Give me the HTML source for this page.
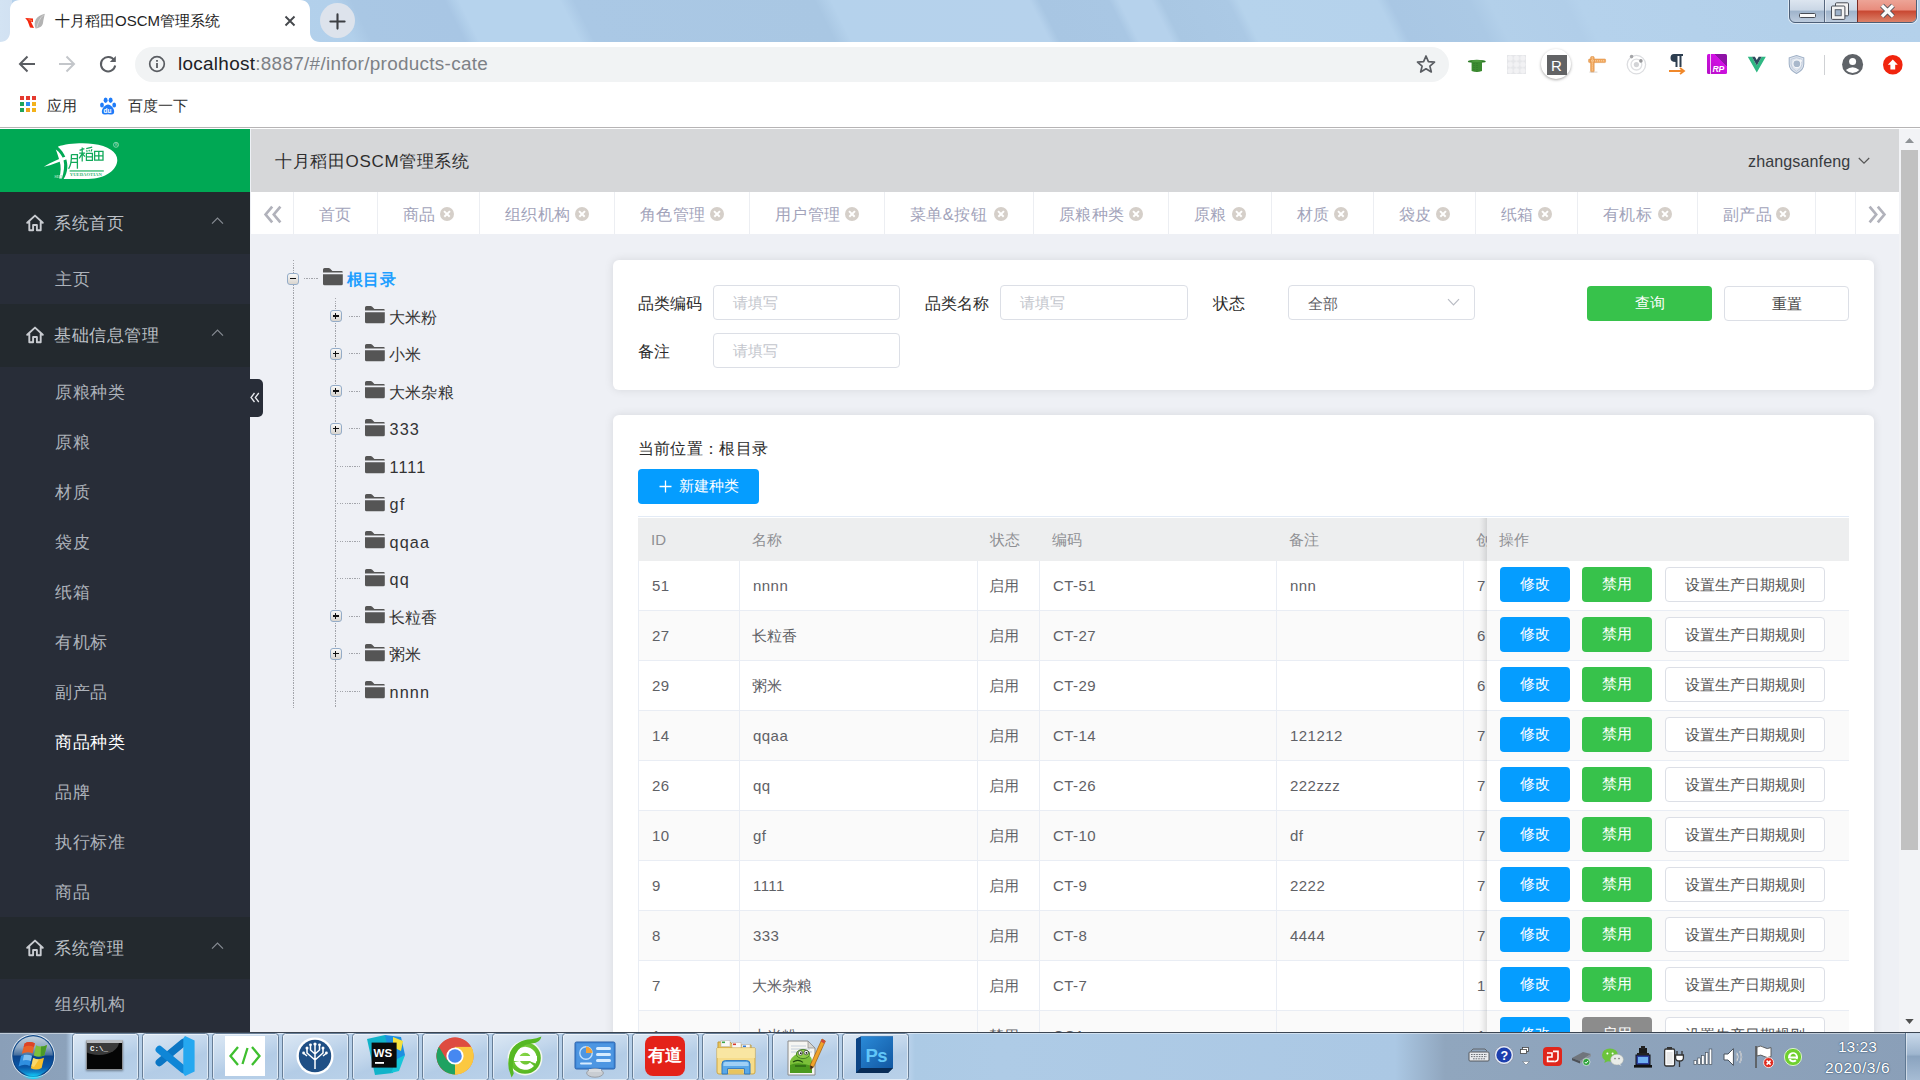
<!DOCTYPE html>
<html lang="zh"><head><meta charset="utf-8"><title>十月稻田OSCM管理系统</title>
<style>
*{box-sizing:border-box}
html,body{margin:0;padding:0;width:1920px;height:1080px;overflow:hidden;background:#fff;font-family:"Liberation Sans",sans-serif;color:#333}
.a{position:absolute}
.t{position:absolute;white-space:nowrap;line-height:1}
svg{position:absolute;overflow:visible}
#strip{left:0;top:0;width:1920px;height:42px;background:linear-gradient(63.4deg,#d3e2f2 9px,#d0e0f0 18px,#b6d2ec 29px,#b2d0eb 317px,#a9c7e4 333px,#a8c6e4 416px,#b6d3ed 429px,#b6d3ed 519px,#aac8e5 532px,#a9c7e3 747px,#b5d2ec 762px,#b6d2ec 939px,#a8c6e3 948px,#a9c7e4 1010px,#b6d2ec 1019px,#b6d2ec 1048px,#a9c7e3 1057px,#abc9e5 1116px,#b6d3ec 1126px,#b5d2ec 1250px,#a9c7e4 1261px,#abc9e5 1332px,#b3d0ea 1350px,#b1cee9 1417px,#b5d2ec 1430px,#b3d0ea 1609px,#b4d1eb 1725px)}
#toolbar{left:0;top:42px;width:1920px;height:46px;background:#fff}
#bm{left:0;top:88px;width:1920px;height:39px;background:#fff}
#page{left:0;top:129px;width:1899px;height:903px;background:#eef0f5;overflow:hidden}
#side{left:0;top:0;width:250px;height:903px;background:#282d38}
#logo{left:0;top:0;width:250px;height:63px;background:#00a854}
.mh{left:0;width:250px;background:#23292e}
.mh .t{left:54px;font-size:17px;letter-spacing:.5px;color:#bcc0c6}
.mi{left:0;width:250px;height:50px}
.mi .t{left:55px;top:17px;font-size:17px;letter-spacing:.5px;color:#adb2ba}
#hdr{left:251px;top:0;width:1648px;height:63px;background:#d6d7d9}
#tabs{left:251px;top:63px;width:1648px;height:42px;background:#fff}
.tab{top:0;height:42px;border-right:1px solid #eceef2}
.tab .t{top:14px;left:24.5px;font-size:16.25px;letter-spacing:.6px;color:#a2a3ba}
.tab i{position:absolute;top:14.5px;width:14px;height:14px;border-radius:50%;background:#d5cfc9}
.tab i:before,.tab i:after{content:"";position:absolute;left:3px;top:6.2px;width:8px;height:1.6px;background:#fff;transform:rotate(45deg)}
.tab i:after{transform:rotate(-45deg)}
.card{background:#fff;border-radius:6px;box-shadow:0 0 10px rgba(0,0,0,.1)}
.inp{height:35px;border:1px solid #dcdfe6;border-radius:4px;background:#fff}
.inp .t{left:19px;top:10px;font-size:14.7px;color:#c3c6cd}
.lbl{font-size:16.25px;color:#2b2b2b}
.btn{height:35px;border-radius:4px;color:#fff;font-size:15px;text-align:center;line-height:34px;white-space:nowrap}
.blue{background:#059dff}.green{background:#37c24b}.wht{background:#fff;border:1px solid #dcdfe6;color:#555}
.th{font-size:15px;color:#8f9094;top:15px}
.td{font-size:15px;color:#5f6166;letter-spacing:.45px}
.tw{position:absolute;width:12px;height:12px;border:1.5px solid #94acc8;border-radius:3px;background:linear-gradient(#f8f8f7,#d8d4ce)}
.tw:before{content:"";position:absolute;left:1.5px;top:4.3px;width:6px;height:1.6px;background:#111}
.tw.p:after{content:"";position:absolute;left:3.7px;top:2.1px;width:1.6px;height:6px;background:#111}
.hd{position:absolute;height:1px;background:repeating-linear-gradient(to right,#a3a5ab 0,#a3a5ab 1.25px,transparent 1.25px,transparent 2.5px)}
.vd{position:absolute;width:1px;background:repeating-linear-gradient(to bottom,#a3a5ab 0,#a3a5ab 1.25px,transparent 1.25px,transparent 2.5px)}
.tn{font-size:16.25px;letter-spacing:.45px;color:#333}
.tb{position:absolute;top:0.5px;width:67px;height:48px;border:1px solid #677e97;border-radius:3.5px;background:linear-gradient(160deg,#dce8f4,#c3d7ec 40%,#b3cce6 60%,#b9d1e9);box-shadow:inset 0 0 0 1px rgba(255,255,255,.55)}
</style></head><body>

<div id="strip" class="a"></div>
<div class="a" style="left:0;top:0;width:12px;height:42px;background:linear-gradient(90deg,#d3e3f3,#d1e1f2)"></div>
<svg style="left:0;top:0" width="330" height="42"><path d="M0 42 C6 42 10 38 10 32 V10 C10 4 14 0 20 0 H300 C306 0 310 4 310 10 V32 C310 38 314 42 320 42 Z" fill="#fff"/></svg>
<svg style="left:24px;top:12px" width="22" height="18" viewBox="0 0 22 18"><path d="M11.6 16.4 C9 10 12 3.6 20.8 1.8 C20 6 19.4 8 19 11 C18.6 14 16 16 11.6 16.4Z" fill="#b3b3b3"/><path d="M13 15.4 C14 10 16 6 19.4 3.2" fill="none" stroke="#dcdcdc" stroke-width=".7"/><path d="M1.2 6 L9 6.6 L9 10.2 L6.8 9.4 L10 16 L6 15.4 L3.6 9Z" fill="#f5260e"/><path d="M4.6 7.6 L8 8.6" stroke="#f9a05a" stroke-width=".8"/></svg>
<div class="t" style="left:55px;top:13px;font-size:15px;color:#1f1f1f">十月稻田OSCM管理系统</div>
<svg style="left:284px;top:15px" width="12" height="12"><path d="M1.5 1.5 L10.5 10.5 M10.5 1.5 L1.5 10.5" stroke="#45484c" stroke-width="1.9" fill="none"/></svg>
<div class="a" style="left:320px;top:3px;width:35px;height:35px;border-radius:50%;background:#dde3ec"></div>
<svg style="left:329px;top:12.5px" width="17" height="17"><path d="M8.5 1.4 V15.6 M1.4 8.5 H15.6" stroke="#3c3f43" stroke-width="2.1" stroke-linecap="round" fill="none"/></svg>
<div class="a" style="left:1789px;top:-6px;width:128px;height:29px;border:1px solid #4d5f77;border-radius:0 0 6px 6px;background:linear-gradient(#e6edf5,#c9d6e5 57%,#9db2ca 58%,#bccbdd);box-shadow:0 0 0 1px rgba(255,255,255,.55)"></div>
<div class="a" style="left:1857px;top:-6px;width:59px;height:28px;border-left:1px solid #7a2a22;border-radius:0 0 5px 0;background:linear-gradient(#f0b3a6,#e88b7c 58%,#c84630 60%,#dc8168)"></div>
<div class="a" style="left:1824px;top:0;width:1px;height:22px;background:#56677f"></div><div class="a" style="left:1825px;top:0;width:1px;height:22px;background:rgba(255,255,255,.5)"></div>
<div class="a" style="left:1799px;top:13px;width:17px;height:5px;border:1px solid #474c55;background:#fafafa;border-radius:1.5px"></div>
<svg style="left:1830px;top:2px" width="20" height="18"><rect x="5.5" y="0.8" width="13" height="13" rx="1" fill="#f4f4f4" stroke="#474c55" stroke-width="1"/><rect x="1.5" y="4" width="13.4" height="13.4" rx="1" fill="#f4f4f4" stroke="#474c55" stroke-width="1"/><rect x="5.2" y="7.7" width="6" height="6" fill="#9fb3cb" stroke="#59616c" stroke-width="1"/></svg>
<svg style="left:1880px;top:4px" width="15" height="14"><path d="M2 1.5 L13 12.5 M13 1.5 L2 12.5" stroke="#4a4f58" stroke-width="5.2" fill="none"/><path d="M2 1.5 L13 12.5 M13 1.5 L2 12.5" stroke="#fafafa" stroke-width="3.4" fill="none"/></svg>
<div id="toolbar" class="a"></div>
<svg style="left:18px;top:55px" width="18" height="18"><path d="M17 9 H2.5 M9.5 1.5 L2 9 L9.5 16.5" stroke="#5a5d62" stroke-width="2" fill="none"/></svg>
<svg style="left:58px;top:55px" width="18" height="18"><path d="M1 9 H15.5 M8.5 1.5 L16 9 L8.5 16.5" stroke="#c3c6ca" stroke-width="2" fill="none"/></svg>
<svg style="left:98px;top:54px" width="20" height="20"><path d="M16.2 6.3 A7.2 7.2 0 1 0 17.2 11.5" stroke="#5a5d62" stroke-width="2" fill="none"/><path d="M17.8 2 V8 H11.8 Z" fill="#5a5d62"/></svg>
<div class="a" style="left:135px;top:47px;width:1314px;height:35px;border-radius:18px;background:#f1f3f4"></div>
<svg style="left:148px;top:55px" width="18" height="18"><circle cx="9" cy="9" r="7.3" stroke="#5a5d62" stroke-width="1.7" fill="none"/><path d="M9 8 V13 M9 5 V6.7" stroke="#5a5d62" stroke-width="1.8"/></svg>
<div class="t" style="left:178px;top:55px;font-size:18.9px;letter-spacing:.3px;color:#202124">localhost<span style="color:#7d8186">:8887/#/infor/products-cate</span></div>
<svg style="left:1416px;top:54px" width="20" height="20" viewBox="0 0 20 20"><path d="M10 2 L12.4 7.6 L18.5 8.1 L13.9 12.1 L15.3 18 L10 14.8 L4.7 18 L6.1 12.1 L1.5 8.1 L7.6 7.6 Z" fill="none" stroke="#5a5d62" stroke-width="1.7" stroke-linejoin="round"/></svg>
<svg style="left:1466px;top:54px" width="22" height="22"><ellipse cx="10.8" cy="7.4" rx="9" ry="1.7" fill="#2b7a24"/><path d="M5.6 7.6 H16 V17 Q10.8 19 5.6 17Z" fill="#3b8a30"/><path d="M8 9 V17 M11 9 V17.6" stroke="#2f7427" stroke-width=".8" stroke-dasharray="1 1"/><ellipse cx="10.8" cy="7" rx="5.4" ry=".9" fill="#4f9d41"/></svg>
<div class="a" style="left:1507px;top:55px;width:19px;height:19px;background:#e5e6e9;background-image:radial-gradient(circle at 50% 50%,#f2f2f4 2.5px,transparent 3px);background-size:6.33px 6.33px"></div>
<div class="a" style="left:1541px;top:49px;width:30px;height:30px;border-radius:50%;background:#fff;box-shadow:0 1px 3px rgba(0,0,0,.35)"></div>
<div class="a" style="left:1546.5px;top:54.6px;width:20px;height:20px;background:#626365;color:#fff;font-size:15px;text-align:center;line-height:21px">R</div>
<svg style="left:1586px;top:54px" width="22" height="22"><rect x="2.6" y="5" width="17" height="3.6" rx=".8" fill="#f2a85e" stroke="#d98a3e" stroke-width=".5"/><rect x="4.6" y="2.6" width="3.6" height="15.4" rx=".8" fill="#f2a85e" stroke="#d98a3e" stroke-width=".5"/><path d="M6.4 3.4 V17.4 M5 6.8 H19" stroke="#fbd9b0" stroke-width=".9" stroke-dasharray="1 1"/><rect x="3.4" y="17.6" width="8" height="1" fill="#c9c0b8" opacity=".7"/></svg>
<svg style="left:1625px;top:53px" width="24" height="24"><circle cx="11.4" cy="11.6" r="9.2" fill="none" stroke="#dcdde0" stroke-width="1.3"/><circle cx="11.4" cy="11.6" r="5.4" fill="none" stroke="#dfe0e3" stroke-width="1.3"/><circle cx="11.4" cy="11.6" r="2.6" fill="#d3d4d7"/><circle cx="6.6" cy="3.6" r="1.8" fill="#a4a5a8"/><circle cx="15.9" cy="7.9" r="1.8" fill="#97989b"/></svg>
<svg style="left:1666px;top:51.5px" width="22" height="24"><path d="M8 2 H17 V4 H15.5 V15 H13.5 V4 H11.5 V15 H9.5 V10 Q4.5 10 4.5 6 Q4.5 2 8 2Z" fill="#2d3e50"/><path d="M3 19 H17 M14 16 L18 19 L14 22" stroke="#f0882a" stroke-width="1.8" fill="none"/></svg>
<div class="a" style="left:1706.5px;top:54.4px;width:20px;height:20px;border-radius:1.5px;background:linear-gradient(225deg,#8f12a6 0,#8f12a6 30%,#d411e6 31%,#b50fc6 100%)"></div><div class="a" style="left:1709.5px;top:54.4px;width:1.6px;height:20px;background:#f0c4f4"></div><div class="t" style="left:1712.6px;top:65.4px;font-size:8.6px;color:#fff;font-weight:bold;font-style:italic;letter-spacing:-.3px">RP</div>
<svg style="left:1746.6px;top:56px" width="19.6" height="16.4" viewBox="0 0 22 20"><path d="M0 1 H5 L11 11.5 L17 1 H22 L11 20Z" fill="#2fb883"/><path d="M5 1 H8.7 L11 5 L13.3 1 H17 L11 11.5Z" fill="#2d4a5e"/></svg>
<svg style="left:1788px;top:54px" width="17" height="21" viewBox="0 0 20 23"><path d="M10 1 L18.6 3.6 V11 Q18.6 18 10 22 Q1.4 18 1.4 11 V3.6Z" fill="#dfe5ee" stroke="#9fb0c6" stroke-width="1.2"/><path d="M10 3.4 L16.4 5.4 V11 Q16.4 16.4 10 19.6 Q3.6 16.4 3.6 11 V5.4Z" fill="none" stroke="#b7c4d6" stroke-width=".9"/><circle cx="10.4" cy="10.6" r="4.6" fill="#a9b8cb" stroke="#f4f6f9" stroke-width="1.3"/><circle cx="15" cy="7" r="1.5" fill="#f4f6f9"/></svg>
<div class="a" style="left:1824px;top:55px;width:1px;height:20px;background:#cfd1d4"></div>
<svg style="left:1842px;top:54px" width="21" height="21"><circle cx="10.6" cy="10.5" r="10.5" fill="#5f6368"/><circle cx="10.6" cy="7.4" r="3.5" fill="#fff"/><path d="M3.9 16 Q10.6 10.6 17.3 16 Q14.4 19 10.6 19 Q6.8 19 3.9 16Z" fill="#fff"/></svg>
<svg style="left:1883px;top:55px" width="20" height="20"><circle cx="9.8" cy="9.7" r="9.8" fill="#f1240d"/><path d="M9.8 4.4 L14.8 9.8 H12.2 V14.6 H7.4 V9.8 H4.8Z" fill="#fff"/></svg>
<div id="bm" class="a"></div>
<div class="a" style="left:20px;top:96px;width:4px;height:4px;background:#e53a2f"></div>
<div class="a" style="left:26px;top:96px;width:4px;height:4px;background:#e53a2f"></div>
<div class="a" style="left:32px;top:96px;width:4px;height:4px;background:#e53a2f"></div>
<div class="a" style="left:20px;top:102px;width:4px;height:4px;background:#1fa45a"></div>
<div class="a" style="left:26px;top:102px;width:4px;height:4px;background:#2f8df0"></div>
<div class="a" style="left:32px;top:102px;width:4px;height:4px;background:#f3b21b"></div>
<div class="a" style="left:20px;top:108px;width:4px;height:4px;background:#1fa45a"></div>
<div class="a" style="left:26px;top:108px;width:4px;height:4px;background:#f3a21b"></div>
<div class="a" style="left:32px;top:108px;width:4px;height:4px;background:#f3b21b"></div>
<div class="t" style="left:47px;top:98px;font-size:15px;color:#2f2f2f">应用</div>
<svg style="left:99px;top:96.5px" width="18" height="19"><ellipse cx="3" cy="8" rx="1.9" ry="2.6" fill="#1f7cf8"/><ellipse cx="6.6" cy="3.3" rx="2" ry="2.7" fill="#1f7cf8"/><ellipse cx="11.6" cy="3.3" rx="2" ry="2.7" fill="#1f7cf8"/><ellipse cx="15.2" cy="8" rx="1.9" ry="2.6" fill="#1f7cf8"/><path d="M9 7.5 Q13 8 15 13 Q16 18 11.5 17.5 Q9 17 6.5 17.5 Q2 18 3 13 Q5 8 9 7.5Z" fill="#1f7cf8"/><text x="4.6" y="15.6" font-size="6.5" fill="#fff" font-family="Liberation Sans" font-weight="bold">du</text></svg>
<div class="t" style="left:128px;top:98px;font-size:15px;color:#2f2f2f">百度一下</div>
<div class="a" style="left:0;top:127px;width:1920px;height:1px;background:#b6b4b5"></div>
<div id="page" class="a">
<div id="side" class="a">
<div id="logo" class="a"><svg style="left:30px;top:3px" width="110" height="58" viewBox="0 0 110 58"><path d="M27.8 14.7 C36 11.6 52 10.6 63 11.9 C78 13.6 87.6 20 87.3 28.2 C87 37.5 76 46.6 58 47 L33.6 47 C38 40 38.4 32 35.6 25.4 C34 21.4 31 17.4 27.8 14.7Z" fill="#fff"/><path d="M13.8 34.8 C21 30.2 29 26.8 38 23.8 L39 26.4 C30 29.4 22 32.8 13.8 34.8Z" fill="#fff"/><path d="M25.8 17.6 C29.4 20 32.4 24 33.6 28.4 C34.8 33.4 34 40 31.8 46.6 L29.2 46.6 C31 40 31.2 33.8 29.6 29.2 C28.6 25.6 27.4 21.4 25.8 17.6Z" fill="#fff"/><path d="M41.4 22.6 H47.4 V36.8 M41.4 22.6 C41.6 29 41 33.4 38.6 36.8 M41.6 26.6 H47 M41.4 30.4 H47" fill="none" stroke="#11a95a" stroke-width="1.3"/><path d="M49.6 18.4 L54.4 16.6 M52.2 15.4 V29.4 M49.2 21.2 H55 M52.2 21.6 L49.2 26.4 M52.4 21.8 L55 24.6" fill="none" stroke="#11a95a" stroke-width="1.25"/><path d="M56.2 16.6 L62.2 15.2 M56.6 18.2 L57.2 19.8 M59 17.8 L59.4 19.4 M62 17.2 L61 19.4 M56.4 21.4 H62.4 V28.4 H56.4Z M56.4 24.8 H62.4" fill="none" stroke="#11a95a" stroke-width="1.2"/><path d="M64.6 19.4 H73 V28.2 H64.6Z M68.8 19.4 V28.2 M64.6 23.8 H73" fill="none" stroke="#11a95a" stroke-width="1.3"/><rect x="39.6" y="38.2" width="34.2" height="1.5" fill="#4cc383"/><text x="39.8" y="44.4" font-family="Liberation Serif" font-weight="bold" font-size="4.6" fill="#36b673" textLength="32" lengthAdjust="spacingAndGlyphs">YUEDAOTIAN</text><text x="24.2" y="46" font-family="Liberation Serif" font-weight="bold" font-size="4.2" fill="#a5e0c0" textLength="8" lengthAdjust="spacingAndGlyphs">SHI</text><circle cx="86" cy="12.8" r="2.5" fill="none" stroke="#9fdcbc" stroke-width=".8"/><text x="84.9" y="14.2" font-family="Liberation Sans" font-size="3.6" fill="#c5ead7">R</text></svg></div>
<div class="a mh" style="top:63px;height:62px"><svg style="left:25px;top:21px" width="20" height="20"><path d="M2.2 9.8 L10 2.6 L17.8 9.8 M4.3 8.6 V17.2 H8.1 V12 H11.9 V17.2 H15.7 V8.6" fill="none" stroke="#c9ccd1" stroke-width="1.9" stroke-linejoin="round" stroke-linecap="round"/></svg><div class="t" style="top:23px">系统首页</div><svg style="left:211px;top:24px" width="13" height="8"><path d="M1 7.6 L6.5 2.1 L12 7.6" fill="none" stroke="#878c93" stroke-width="1.15"/></svg></div>
<div class="a mi" style="top:125px"><div class="t" style="">主页</div></div>
<div class="a mh" style="top:175px;height:63px"><svg style="left:25px;top:21px" width="20" height="20"><path d="M2.2 9.8 L10 2.6 L17.8 9.8 M4.3 8.6 V17.2 H8.1 V12 H11.9 V17.2 H15.7 V8.6" fill="none" stroke="#c9ccd1" stroke-width="1.9" stroke-linejoin="round" stroke-linecap="round"/></svg><div class="t" style="top:23px">基础信息管理</div><svg style="left:211px;top:24px" width="13" height="8"><path d="M1 7.6 L6.5 2.1 L12 7.6" fill="none" stroke="#878c93" stroke-width="1.15"/></svg></div>
<div class="a mi" style="top:238px"><div class="t" style="">原粮种类</div></div>
<div class="a mi" style="top:288px"><div class="t" style="">原粮</div></div>
<div class="a mi" style="top:338px"><div class="t" style="">材质</div></div>
<div class="a mi" style="top:388px"><div class="t" style="">袋皮</div></div>
<div class="a mi" style="top:438px"><div class="t" style="">纸箱</div></div>
<div class="a mi" style="top:488px"><div class="t" style="">有机标</div></div>
<div class="a mi" style="top:538px"><div class="t" style="">副产品</div></div>
<div class="a mi" style="top:588px"><div class="t" style="color:#fff">商品种类</div></div>
<div class="a mi" style="top:638px"><div class="t" style="">品牌</div></div>
<div class="a mi" style="top:688px"><div class="t" style="">执行标准</div></div>
<div class="a mi" style="top:738px"><div class="t" style="">商品</div></div>
<div class="a mh" style="top:788px;height:62px"><svg style="left:25px;top:21px" width="20" height="20"><path d="M2.2 9.8 L10 2.6 L17.8 9.8 M4.3 8.6 V17.2 H8.1 V12 H11.9 V17.2 H15.7 V8.6" fill="none" stroke="#c9ccd1" stroke-width="1.9" stroke-linejoin="round" stroke-linecap="round"/></svg><div class="t" style="top:23px">系统管理</div><svg style="left:211px;top:24px" width="13" height="8"><path d="M1 7.6 L6.5 2.1 L12 7.6" fill="none" stroke="#878c93" stroke-width="1.15"/></svg></div>
<div class="a mi" style="top:850px"><div class="t" style="">组织机构</div></div>
</div>
<div class="a" style="left:250px;top:250px;width:13px;height:38px;background:#282d38;border-radius:0 5px 5px 0"></div>
<svg style="left:250px;top:263px" width="10" height="11"><path d="M4.5 1 L1 5.5 L4.5 10 M8.8 1 L5.3 5.5 L8.8 10" fill="none" stroke="#e8eaee" stroke-width="1.3"/></svg>
<div id="hdr" class="a"><div class="t" style="left:24px;top:24px;letter-spacing:.65px;font-size:17px;color:#2e2e2e">十月稻田OSCM管理系统</div><div class="t" style="left:1497px;top:24px;font-size:16.1px;letter-spacing:.1px;color:#383b40">zhangsanfeng</div><svg style="left:1607px;top:28px" width="12" height="8"><path d="M0.8 1 L6 6.2 L11.2 1" fill="none" stroke="#555" stroke-width="1.2"/></svg></div>
<div id="tabs" class="a">
<div class="a tab" style="left:0;width:43px"></div>
<svg style="left:13px;top:13.6px" width="18" height="17"><path d="M8.2 0.6 L1.6 8.5 L8.2 16.4 M16.4 0.6 L9.8 8.5 L16.4 16.4" fill="none" stroke="#b1b2bb" stroke-width="2.7"/></svg>
<div class="a tab" style="left:43px;width:84px"><div class="t">首页</div></div>
<div class="a tab" style="left:127px;width:102px"><div class="t">商品</div><i style="left:61.5px"></i></div>
<div class="a tab" style="left:229px;width:135px"><div class="t">组织机构</div><i style="left:94.5px"></i></div>
<div class="a tab" style="left:364px;width:135px"><div class="t">角色管理</div><i style="left:94.5px"></i></div>
<div class="a tab" style="left:499px;width:135px"><div class="t">用户管理</div><i style="left:94.5px"></i></div>
<div class="a tab" style="left:634px;width:149px"><div class="t">菜单&amp;按钮</div><i style="left:108.5px"></i></div>
<div class="a tab" style="left:783px;width:135px"><div class="t">原粮种类</div><i style="left:94.5px"></i></div>
<div class="a tab" style="left:918px;width:103px"><div class="t">原粮</div><i style="left:62.5px"></i></div>
<div class="a tab" style="left:1021px;width:102px"><div class="t">材质</div><i style="left:61.5px"></i></div>
<div class="a tab" style="left:1123px;width:102px"><div class="t">袋皮</div><i style="left:61.5px"></i></div>
<div class="a tab" style="left:1225px;width:102px"><div class="t">纸箱</div><i style="left:61.5px"></i></div>
<div class="a tab" style="left:1327px;width:120px"><div class="t">有机标</div><i style="left:79.5px"></i></div>
<div class="a tab" style="left:1447px;width:118px"><div class="t">副产品</div><i style="left:77.5px"></i></div>
<div class="a tab" style="left:1565px;width:40px"><div class="t"></div></div>
<svg style="left:1617px;top:13.6px" width="18" height="17"><path d="M1.6 0.6 L8.2 8.5 L1.6 16.4 M9.8 0.6 L16.4 8.5 L9.8 16.4" fill="none" stroke="#b1b2bb" stroke-width="2.7"/></svg>
</div>
<div class="vd" style="left:293px;top:131px;height:448px"></div>
<div class="vd" style="left:335px;top:169px;height:410px"></div>
<div class="tw" style="left:287px;top:143.5px"></div>
<div class="hd" style="left:304px;top:149.0px;width:14px"></div>
<svg style="left:322.8px;top:139.0px" width="20" height="18" viewBox="0 0 20 18"><path d="M0 1.6 Q0 0 1.6 0 H5.6 Q6.4 0 7 .6 L9.4 3.1 H18.6 Q19.8 3.1 19.8 4.4 H0Z" fill="#555"/><path d="M0 6.3 H19.8 V15.8 Q19.8 17.3 18.3 17.3 H1.5 Q0 17.3 0 15.8Z" fill="#555"/></svg>
<div class="t tn" style="left:347px;top:141.5px;color:#1e9fff;font-weight:bold">根目录</div>
<div class="tw p" style="left:330px;top:181.0px"></div>
<div class="hd" style="left:349px;top:186.5px;width:11px"></div>
<svg style="left:365px;top:177.0px" width="20" height="18" viewBox="0 0 20 18"><path d="M0 1.6 Q0 0 1.6 0 H5.6 Q6.4 0 7 .6 L9.4 3.1 H18.6 Q19.8 3.1 19.8 4.4 H0Z" fill="#555"/><path d="M0 6.3 H19.8 V15.8 Q19.8 17.3 18.3 17.3 H1.5 Q0 17.3 0 15.8Z" fill="#555"/></svg>
<div class="t tn" style="left:388.5px;top:179.5px">大米粉</div>
<div class="tw p" style="left:330px;top:218.5px"></div>
<div class="hd" style="left:349px;top:224.0px;width:11px"></div>
<svg style="left:365px;top:214.5px" width="20" height="18" viewBox="0 0 20 18"><path d="M0 1.6 Q0 0 1.6 0 H5.6 Q6.4 0 7 .6 L9.4 3.1 H18.6 Q19.8 3.1 19.8 4.4 H0Z" fill="#555"/><path d="M0 6.3 H19.8 V15.8 Q19.8 17.3 18.3 17.3 H1.5 Q0 17.3 0 15.8Z" fill="#555"/></svg>
<div class="t tn" style="left:388.5px;top:217.0px">小米</div>
<div class="tw p" style="left:330px;top:256.0px"></div>
<div class="hd" style="left:349px;top:261.5px;width:11px"></div>
<svg style="left:365px;top:252.0px" width="20" height="18" viewBox="0 0 20 18"><path d="M0 1.6 Q0 0 1.6 0 H5.6 Q6.4 0 7 .6 L9.4 3.1 H18.6 Q19.8 3.1 19.8 4.4 H0Z" fill="#555"/><path d="M0 6.3 H19.8 V15.8 Q19.8 17.3 18.3 17.3 H1.5 Q0 17.3 0 15.8Z" fill="#555"/></svg>
<div class="t tn" style="left:388.5px;top:254.5px">大米杂粮</div>
<div class="tw p" style="left:330px;top:293.5px"></div>
<div class="hd" style="left:349px;top:299.0px;width:11px"></div>
<svg style="left:365px;top:289.5px" width="20" height="18" viewBox="0 0 20 18"><path d="M0 1.6 Q0 0 1.6 0 H5.6 Q6.4 0 7 .6 L9.4 3.1 H18.6 Q19.8 3.1 19.8 4.4 H0Z" fill="#555"/><path d="M0 6.3 H19.8 V15.8 Q19.8 17.3 18.3 17.3 H1.5 Q0 17.3 0 15.8Z" fill="#555"/></svg>
<div class="t tn" style="left:389.5px;top:292.0px;letter-spacing:1.1px">333</div>
<div class="hd" style="left:337px;top:336.5px;width:23px"></div>
<svg style="left:365px;top:327.0px" width="20" height="18" viewBox="0 0 20 18"><path d="M0 1.6 Q0 0 1.6 0 H5.6 Q6.4 0 7 .6 L9.4 3.1 H18.6 Q19.8 3.1 19.8 4.4 H0Z" fill="#555"/><path d="M0 6.3 H19.8 V15.8 Q19.8 17.3 18.3 17.3 H1.5 Q0 17.3 0 15.8Z" fill="#555"/></svg>
<div class="t tn" style="left:389.5px;top:329.5px;letter-spacing:1.1px">1111</div>
<div class="hd" style="left:337px;top:374.0px;width:23px"></div>
<svg style="left:365px;top:364.5px" width="20" height="18" viewBox="0 0 20 18"><path d="M0 1.6 Q0 0 1.6 0 H5.6 Q6.4 0 7 .6 L9.4 3.1 H18.6 Q19.8 3.1 19.8 4.4 H0Z" fill="#555"/><path d="M0 6.3 H19.8 V15.8 Q19.8 17.3 18.3 17.3 H1.5 Q0 17.3 0 15.8Z" fill="#555"/></svg>
<div class="t tn" style="left:389.5px;top:367.0px;letter-spacing:1.1px">gf</div>
<div class="hd" style="left:337px;top:411.5px;width:23px"></div>
<svg style="left:365px;top:402.0px" width="20" height="18" viewBox="0 0 20 18"><path d="M0 1.6 Q0 0 1.6 0 H5.6 Q6.4 0 7 .6 L9.4 3.1 H18.6 Q19.8 3.1 19.8 4.4 H0Z" fill="#555"/><path d="M0 6.3 H19.8 V15.8 Q19.8 17.3 18.3 17.3 H1.5 Q0 17.3 0 15.8Z" fill="#555"/></svg>
<div class="t tn" style="left:389.5px;top:404.5px;letter-spacing:1.1px">qqaa</div>
<div class="hd" style="left:337px;top:449.0px;width:23px"></div>
<svg style="left:365px;top:439.5px" width="20" height="18" viewBox="0 0 20 18"><path d="M0 1.6 Q0 0 1.6 0 H5.6 Q6.4 0 7 .6 L9.4 3.1 H18.6 Q19.8 3.1 19.8 4.4 H0Z" fill="#555"/><path d="M0 6.3 H19.8 V15.8 Q19.8 17.3 18.3 17.3 H1.5 Q0 17.3 0 15.8Z" fill="#555"/></svg>
<div class="t tn" style="left:389.5px;top:442.0px;letter-spacing:1.1px">qq</div>
<div class="tw p" style="left:330px;top:481.0px"></div>
<div class="hd" style="left:349px;top:486.5px;width:11px"></div>
<svg style="left:365px;top:477.0px" width="20" height="18" viewBox="0 0 20 18"><path d="M0 1.6 Q0 0 1.6 0 H5.6 Q6.4 0 7 .6 L9.4 3.1 H18.6 Q19.8 3.1 19.8 4.4 H0Z" fill="#555"/><path d="M0 6.3 H19.8 V15.8 Q19.8 17.3 18.3 17.3 H1.5 Q0 17.3 0 15.8Z" fill="#555"/></svg>
<div class="t tn" style="left:388.5px;top:479.5px">长粒香</div>
<div class="tw p" style="left:330px;top:518.5px"></div>
<div class="hd" style="left:349px;top:524.0px;width:11px"></div>
<svg style="left:365px;top:514.5px" width="20" height="18" viewBox="0 0 20 18"><path d="M0 1.6 Q0 0 1.6 0 H5.6 Q6.4 0 7 .6 L9.4 3.1 H18.6 Q19.8 3.1 19.8 4.4 H0Z" fill="#555"/><path d="M0 6.3 H19.8 V15.8 Q19.8 17.3 18.3 17.3 H1.5 Q0 17.3 0 15.8Z" fill="#555"/></svg>
<div class="t tn" style="left:388.5px;top:517.0px">粥米</div>
<div class="hd" style="left:337px;top:561.5px;width:23px"></div>
<svg style="left:365px;top:552.0px" width="20" height="18" viewBox="0 0 20 18"><path d="M0 1.6 Q0 0 1.6 0 H5.6 Q6.4 0 7 .6 L9.4 3.1 H18.6 Q19.8 3.1 19.8 4.4 H0Z" fill="#555"/><path d="M0 6.3 H19.8 V15.8 Q19.8 17.3 18.3 17.3 H1.5 Q0 17.3 0 15.8Z" fill="#555"/></svg>
<div class="t tn" style="left:389.5px;top:554.5px;letter-spacing:1.1px">nnnn</div>
<div class="a card" style="left:613px;top:131px;width:1261px;height:130px">
<div class="t lbl" style="left:25px;top:35px">品类编码</div>
<div class="a inp" style="left:100px;top:25px;width:187px"><div class="t">请填写</div></div>
<div class="t lbl" style="left:312px;top:35px">品类名称</div>
<div class="a inp" style="left:387px;top:25px;width:188px"><div class="t">请填写</div></div>
<div class="t lbl" style="left:600px;top:35px">状态</div>
<div class="a inp" style="left:675px;top:25px;width:187px"><div class="t" style="color:#5f6166;font-size:15px">全部</div><svg style="left:158px;top:12px" width="13" height="9"><path d="M1 1.2 L6.5 6.8 L12 1.2" fill="none" stroke="#b9bcc4" stroke-width="1.2"/></svg></div>
<div class="a btn green" style="left:974px;top:26px;width:125px">查询</div>
<div class="a btn wht" style="left:1111px;top:26px;width:125px;color:#444">重置</div>
<div class="t lbl" style="left:25px;top:83px">备注</div>
<div class="a inp" style="left:100px;top:73px;width:187px"><div class="t">请填写</div></div>
</div>
<div class="a card" style="left:613px;top:286px;width:1261px;height:700px">
<div class="t lbl" style="left:24.5px;top:25px;letter-spacing:.4px">当前位置：根目录</div>
<div class="a btn blue" style="left:25px;top:54px;width:121px;height:35px"><svg style="left:21px;top:11px" width="13" height="13"><path d="M6.5 0.5 V12.5 M0.5 6.5 H12.5" stroke="#fff" stroke-width="1.3"/></svg><span style="position:absolute;left:41px;top:0">新建种类</span></div>
<div class="a" style="left:25px;top:101px;width:1211px;height:1px;background:#e3ebf6"></div>
<div class="a" style="left:25px;top:103px;width:1211px;height:43px;background:#edeeef"></div>
<div class="t th" style="left:38px;top:117px">ID</div>
<div class="t th" style="left:139px;top:117px">名称</div>
<div class="t th" style="left:377px;top:117px">状态</div>
<div class="t th" style="left:439px;top:117px">编码</div>
<div class="t th" style="left:676px;top:117px">备注</div>
<div class="t th" style="left:863px;top:117px">创建</div>
<div class="a" style="left:25px;top:146px;width:1211px;height:50px;background:#fff;border-bottom:1px solid #e9edf4"></div>
<div class="t td" style="left:39px;top:163px">51</div>
<div class="t td" style="left:140px;top:163px">nnnn</div>
<div class="t td" style="left:376px;top:163px;letter-spacing:0">启用</div>
<div class="t td" style="left:440px;top:163px">CT-51</div>
<div class="t td" style="left:677px;top:163px">nnn</div>
<div class="t td" style="left:864px;top:163px">7</div>
<div class="a" style="left:25px;top:196px;width:1211px;height:50px;background:#fafafa;border-bottom:1px solid #e9edf4"></div>
<div class="t td" style="left:39px;top:213px">27</div>
<div class="t td" style="left:139px;top:213px;letter-spacing:0">长粒香</div>
<div class="t td" style="left:376px;top:213px;letter-spacing:0">启用</div>
<div class="t td" style="left:440px;top:213px">CT-27</div>
<div class="t td" style="left:864px;top:213px">6</div>
<div class="a" style="left:25px;top:246px;width:1211px;height:50px;background:#fff;border-bottom:1px solid #e9edf4"></div>
<div class="t td" style="left:39px;top:263px">29</div>
<div class="t td" style="left:139px;top:263px;letter-spacing:0">粥米</div>
<div class="t td" style="left:376px;top:263px;letter-spacing:0">启用</div>
<div class="t td" style="left:440px;top:263px">CT-29</div>
<div class="t td" style="left:864px;top:263px">6</div>
<div class="a" style="left:25px;top:296px;width:1211px;height:50px;background:#fafafa;border-bottom:1px solid #e9edf4"></div>
<div class="t td" style="left:39px;top:313px">14</div>
<div class="t td" style="left:140px;top:313px">qqaa</div>
<div class="t td" style="left:376px;top:313px;letter-spacing:0">启用</div>
<div class="t td" style="left:440px;top:313px">CT-14</div>
<div class="t td" style="left:677px;top:313px">121212</div>
<div class="t td" style="left:864px;top:313px">7</div>
<div class="a" style="left:25px;top:346px;width:1211px;height:50px;background:#fff;border-bottom:1px solid #e9edf4"></div>
<div class="t td" style="left:39px;top:363px">26</div>
<div class="t td" style="left:140px;top:363px">qq</div>
<div class="t td" style="left:376px;top:363px;letter-spacing:0">启用</div>
<div class="t td" style="left:440px;top:363px">CT-26</div>
<div class="t td" style="left:677px;top:363px">222zzz</div>
<div class="t td" style="left:864px;top:363px">7</div>
<div class="a" style="left:25px;top:396px;width:1211px;height:50px;background:#fafafa;border-bottom:1px solid #e9edf4"></div>
<div class="t td" style="left:39px;top:413px">10</div>
<div class="t td" style="left:140px;top:413px">gf</div>
<div class="t td" style="left:376px;top:413px;letter-spacing:0">启用</div>
<div class="t td" style="left:440px;top:413px">CT-10</div>
<div class="t td" style="left:677px;top:413px">df</div>
<div class="t td" style="left:864px;top:413px">7</div>
<div class="a" style="left:25px;top:446px;width:1211px;height:50px;background:#fff;border-bottom:1px solid #e9edf4"></div>
<div class="t td" style="left:39px;top:463px">9</div>
<div class="t td" style="left:140px;top:463px">1111</div>
<div class="t td" style="left:376px;top:463px;letter-spacing:0">启用</div>
<div class="t td" style="left:440px;top:463px">CT-9</div>
<div class="t td" style="left:677px;top:463px">2222</div>
<div class="t td" style="left:864px;top:463px">7</div>
<div class="a" style="left:25px;top:496px;width:1211px;height:50px;background:#fafafa;border-bottom:1px solid #e9edf4"></div>
<div class="t td" style="left:39px;top:513px">8</div>
<div class="t td" style="left:140px;top:513px">333</div>
<div class="t td" style="left:376px;top:513px;letter-spacing:0">启用</div>
<div class="t td" style="left:440px;top:513px">CT-8</div>
<div class="t td" style="left:677px;top:513px">4444</div>
<div class="t td" style="left:864px;top:513px">7</div>
<div class="a" style="left:25px;top:546px;width:1211px;height:50px;background:#fff;border-bottom:1px solid #e9edf4"></div>
<div class="t td" style="left:39px;top:563px">7</div>
<div class="t td" style="left:139px;top:563px;letter-spacing:0">大米杂粮</div>
<div class="t td" style="left:376px;top:563px;letter-spacing:0">启用</div>
<div class="t td" style="left:440px;top:563px">CT-7</div>
<div class="t td" style="left:864px;top:563px">1</div>
<div class="a" style="left:25px;top:596px;width:1211px;height:50px;background:#fafafa;border-bottom:1px solid #e9edf4"></div>
<div class="t td" style="left:39px;top:613px">1</div>
<div class="t td" style="left:139px;top:613px;letter-spacing:0">大米粉</div>
<div class="t td" style="left:376px;top:613px;letter-spacing:0">禁用</div>
<div class="t td" style="left:440px;top:613px">CC1</div>
<div class="t td" style="left:864px;top:613px">1</div>
<div class="a" style="left:25px;top:146px;width:1px;height:560px;background:#e9edf4"></div>
<div class="a" style="left:126px;top:146px;width:1px;height:560px;background:#e9edf4"></div>
<div class="a" style="left:364px;top:146px;width:1px;height:560px;background:#e9edf4"></div>
<div class="a" style="left:426px;top:146px;width:1px;height:560px;background:#e9edf4"></div>
<div class="a" style="left:663px;top:146px;width:1px;height:560px;background:#e9edf4"></div>
<div class="a" style="left:850px;top:146px;width:1px;height:560px;background:#e9edf4"></div>
<div class="a" style="left:866px;top:103px;width:8px;height:600px;background:linear-gradient(to left,rgba(0,0,0,.11),rgba(0,0,0,.03) 60%,rgba(0,0,0,0))"></div>
<div class="a" style="left:874px;top:102px;width:362px;height:600px">
<div class="a" style="left:0;top:1px;width:362px;height:43px;background:#edeeef"></div>
<div class="t th" style="left:12px;top:15px">操作</div>
<div class="a" style="left:0;top:44px;width:362px;height:50px;background:#fff;border-bottom:1px solid #e9edf4"></div>
<div class="a btn blue" style="left:13px;top:50px;width:70px">修改</div>
<div class="a btn green" style="left:95px;top:50px;width:70px">禁用</div>
<div class="a btn wht" style="left:178px;top:50px;width:160px">设置生产日期规则</div>
<div class="a" style="left:0;top:94px;width:362px;height:50px;background:#fafafa;border-bottom:1px solid #e9edf4"></div>
<div class="a btn blue" style="left:13px;top:100px;width:70px">修改</div>
<div class="a btn green" style="left:95px;top:100px;width:70px">禁用</div>
<div class="a btn wht" style="left:178px;top:100px;width:160px">设置生产日期规则</div>
<div class="a" style="left:0;top:144px;width:362px;height:50px;background:#fff;border-bottom:1px solid #e9edf4"></div>
<div class="a btn blue" style="left:13px;top:150px;width:70px">修改</div>
<div class="a btn green" style="left:95px;top:150px;width:70px">禁用</div>
<div class="a btn wht" style="left:178px;top:150px;width:160px">设置生产日期规则</div>
<div class="a" style="left:0;top:194px;width:362px;height:50px;background:#fafafa;border-bottom:1px solid #e9edf4"></div>
<div class="a btn blue" style="left:13px;top:200px;width:70px">修改</div>
<div class="a btn green" style="left:95px;top:200px;width:70px">禁用</div>
<div class="a btn wht" style="left:178px;top:200px;width:160px">设置生产日期规则</div>
<div class="a" style="left:0;top:244px;width:362px;height:50px;background:#fff;border-bottom:1px solid #e9edf4"></div>
<div class="a btn blue" style="left:13px;top:250px;width:70px">修改</div>
<div class="a btn green" style="left:95px;top:250px;width:70px">禁用</div>
<div class="a btn wht" style="left:178px;top:250px;width:160px">设置生产日期规则</div>
<div class="a" style="left:0;top:294px;width:362px;height:50px;background:#fafafa;border-bottom:1px solid #e9edf4"></div>
<div class="a btn blue" style="left:13px;top:300px;width:70px">修改</div>
<div class="a btn green" style="left:95px;top:300px;width:70px">禁用</div>
<div class="a btn wht" style="left:178px;top:300px;width:160px">设置生产日期规则</div>
<div class="a" style="left:0;top:344px;width:362px;height:50px;background:#fff;border-bottom:1px solid #e9edf4"></div>
<div class="a btn blue" style="left:13px;top:350px;width:70px">修改</div>
<div class="a btn green" style="left:95px;top:350px;width:70px">禁用</div>
<div class="a btn wht" style="left:178px;top:350px;width:160px">设置生产日期规则</div>
<div class="a" style="left:0;top:394px;width:362px;height:50px;background:#fafafa;border-bottom:1px solid #e9edf4"></div>
<div class="a btn blue" style="left:13px;top:400px;width:70px">修改</div>
<div class="a btn green" style="left:95px;top:400px;width:70px">禁用</div>
<div class="a btn wht" style="left:178px;top:400px;width:160px">设置生产日期规则</div>
<div class="a" style="left:0;top:444px;width:362px;height:50px;background:#fff;border-bottom:1px solid #e9edf4"></div>
<div class="a btn blue" style="left:13px;top:450px;width:70px">修改</div>
<div class="a btn green" style="left:95px;top:450px;width:70px">禁用</div>
<div class="a btn wht" style="left:178px;top:450px;width:160px">设置生产日期规则</div>
<div class="a" style="left:0;top:494px;width:362px;height:50px;background:#fafafa;border-bottom:1px solid #e9edf4"></div>
<div class="a btn blue" style="left:13px;top:500px;width:70px">修改</div>
<div class="a btn " style="left:95px;top:500px;width:70px;background:#8c8c8c">启用</div>
<div class="a btn wht" style="left:178px;top:500px;width:160px">设置生产日期规则</div>
</div>
</div>
</div>
<div class="a" style="left:1899px;top:129px;width:21px;height:903px;background:#f2f3f6"></div>
<div class="a" style="left:1901px;top:150px;width:17px;height:700px;background:#c1c1c1"></div>
<svg style="left:1905px;top:138px" width="9" height="5"><path d="M4.5 0 L9 5 H0Z" fill="#8e9296"/></svg>
<svg style="left:1905px;top:1019px" width="9" height="5" viewBox="0 0 10 6"><path d="M0 0 H10 L5 6Z" fill="#505050"/></svg>
<div class="a" style="left:0;top:1032px;width:1920px;height:48px;background:linear-gradient(90deg,#8a9fb8 0,#8ca2bb 66px,#b4cee8 72px,#b6d0ea 910px,#accae5 915px,#aecbe6 1000px,#abc8e4 1395px,#90a6be 1445px,#8a9fb8 1920px);border-top:1px solid #3b4552;box-shadow:inset 0 1px 0 rgba(255,255,255,.45)"></div>
<div class="a" id="tbar" style="left:0;top:1032px;width:1920px;height:48px">
<div class="tb" style="left:72px"></div>
<div class="tb" style="left:142px"></div>
<div class="tb" style="left:212px"></div>
<div class="tb" style="left:282px"></div>
<div class="tb" style="left:352px"></div>
<div class="tb" style="left:422px"></div>
<div class="tb" style="left:492px"></div>
<div class="tb" style="left:562px"></div>
<div class="tb" style="left:632px"></div>
<div class="tb" style="left:702px"></div>
<div class="tb" style="left:772px"></div>
<div class="tb" style="left:842px"></div>
<svg style="left:10px;top:2px" width="46" height="46" viewBox="0 0 46 46"><defs><linearGradient id="og" x1="0" y1="0" x2="0" y2="1"><stop offset="0" stop-color="#c3d0dc"/><stop offset=".28" stop-color="#8fa9c4"/><stop offset=".47" stop-color="#466f9e"/><stop offset=".5" stop-color="#0b438a"/><stop offset=".78" stop-color="#0a58a8"/><stop offset="1" stop-color="#10a8e4"/></linearGradient><radialGradient id="oc" cx="50%" cy="100%" r="50%"><stop offset="0" stop-color="#10d8ff"/><stop offset="1" stop-color="#10d8ff" stop-opacity="0"/></radialGradient></defs><circle cx="23.2" cy="22.1" r="21.9" fill="#e3ebf2"/><circle cx="23.2" cy="22.1" r="21" fill="#0c4688"/><circle cx="23.2" cy="22.1" r="19.8" fill="url(#og)"/><ellipse cx="23.2" cy="38" rx="13" ry="7" fill="url(#oc)"/><path d="M14.6 9.4 Q19 6.6 24.8 9.2 L22.6 19.4 Q17.4 17 11.8 19.8Z" fill="#e8632a"/><path d="M14.6 9.4 Q19 6.6 24.8 9.2 L24 13 Q18.6 10.6 13.6 13.2Z" fill="#dc4326"/><path d="M26 11.2 Q31 14 37 11 L34.4 21.2 Q29 24 23.8 21.4Z" fill="#7cc03c"/><path d="M31 12.6 Q34 12.6 37 11 L34.4 21.2 Q32.6 22.2 30.6 22.6Z" fill="#4a9a2a"/><path d="M11 22 Q16.4 19.2 22 21.8 L19.6 32 Q14.6 29.4 8.6 32.4Z" fill="#2f8fe0"/><path d="M14 21 Q18 20.4 22 21.8 L20.8 27 Q17 25.6 12.8 26.4Z" fill="#9fd0f4" opacity=".75"/><path d="M23.2 24 Q28.4 26.6 34 23.8 L31.6 34 Q26.4 37 20.8 34.2Z" fill="#f7bf2c"/><path d="M23.2 24 Q26 25.4 29 25.4 L24 33 L21.4 32Z" fill="#fbe07a" opacity=".8"/></svg>
<div class="a" style="left:86px;top:8px;width:37px;height:30px;background:#050505;border:1px solid #8d9094;border-top:3px solid #b9bcc0;box-shadow:0 1px 2px rgba(0,0,0,.4);overflow:hidden"><div class="a" style="left:-8px;top:-14px;width:40px;height:26px;border-radius:50%;background:#3a3a3a"></div></div><div class="t" style="left:90px;top:14px;font-size:7.5px;color:#f2f2f2;font-family:'Liberation Mono',monospace;font-weight:bold">C:\_</div>
<svg style="left:155px;top:4px" width="42" height="42" viewBox="0 0 42 42"><path d="M28.6 6.4 L4.4 26.4" stroke="#0b76c4" stroke-width="7.6" stroke-linecap="round"/><path d="M28.6 33.6 L4.4 13.6" stroke="#0f86d6" stroke-width="7.6" stroke-linecap="round"/><path d="M28.3 2.3 L30 0 L39.6 4.4 V35.4 L30 40 L28.3 37.5Z" fill="#25a8f0"/><path d="M24 0.6 L30 0 L30 11 L24.6 7Z M24 39.4 L30 40 L30 29 L24.6 33Z" fill="#25a8f0" opacity="0"/></svg>
<div class="a" style="left:225px;top:4px;width:40px;height:40px;background:#fff"></div><svg style="left:229px;top:13px" width="32" height="22"><path d="M9 2 L1.5 11 L9 20 M23 2 L30.5 11 L23 20 M18.5 3 L13.5 19" fill="none" stroke="#3fbf2f" stroke-width="2.3"/></svg>
<svg style="left:294.8px;top:4px" width="40" height="40" viewBox="0 0 40 40"><circle cx="20" cy="20" r="18.6" fill="#fff"/><circle cx="20" cy="20" r="16.2" fill="#1f4f85"/><g fill="none" stroke="#fff" stroke-width="1.5"><path d="M20 33 V9 M20 24 L12 17 V13 M20 24 L28 17 V13 M20 18 L15.5 14 V9.5 M20 18 L24.5 14 V9.5 M12 20 L9 17.5 M28 20 L31 17.5"/></g><g fill="#fff"><circle cx="20" cy="8" r="1.6"/><circle cx="12" cy="12" r="1.5"/><circle cx="28" cy="12" r="1.5"/><circle cx="15.5" cy="8.8" r="1.4"/><circle cx="24.5" cy="8.8" r="1.4"/><circle cx="8.6" cy="17" r="1.4"/><circle cx="31.4" cy="17" r="1.4"/></g></svg>
<svg style="left:363.4px;top:1.4px" width="44" height="44" viewBox="0 0 44 44"><path d="M4 6 L22 2 L34 8 L30 40 L12 42Z" fill="#11b3c9"/><path d="M22 2 L38 4 L42 22 L34 36 L26 20Z" fill="#1e8fe0"/><path d="M30 4 L40 8 L38 18 L30 14Z" fill="#f5e13c"/><path d="M34 26 L42 22 L36 38 L28 40Z" fill="#16c6d8"/><rect x="8.6" y="9.6" width="25" height="25" fill="#0b0b0b"/><text x="10.6" y="24" font-family="Liberation Sans" font-weight="bold" font-size="11.5" fill="#fff">WS</text><rect x="12" y="29" width="9" height="1.8" fill="#fff"/></svg>
<svg style="left:435px;top:3.5px" width="40" height="40" viewBox="0 0 40 40"><circle cx="20" cy="20" r="18.5" fill="#de4c40"/><path d="M20 20 L3.98 10.75 A18.5 18.5 0 0 0 10.75 36.02Z" fill="#de4c40"/><path d="M20 20 L10.75 36.02 A18.5 18.5 0 0 0 36.02 10.75 L20 10.75Z" fill="#fbc840"/><path d="M20 20 L3.98 10.75 A18.5 18.5 0 0 0 20 38.5 L28 24.6Z" fill="#1fa261"/><path d="M20 20 L20 38.5 A18.5 18.5 0 0 0 36.02 10.75 L20 10.75Z" fill="#fbc840"/><path d="M3.98 10.75 A18.5 18.5 0 0 1 36.02 10.75 L20 10.75 L12 24.6Z" fill="#de4c40"/><circle cx="20" cy="20" r="8.6" fill="#fff"/><circle cx="20" cy="20" r="6.8" fill="#4688f1"/></svg>
<svg style="left:505px;top:3px" width="42" height="44" viewBox="0 0 42 44"><defs><radialGradient id="g3" cx="40%" cy="35%" r="70%"><stop offset="0" stop-color="#8ad84a"/><stop offset="1" stop-color="#52b41f"/></radialGradient></defs><circle cx="20" cy="23" r="17.4" fill="#f3f7ef"/><circle cx="20" cy="23" r="15.8" fill="url(#g3)"/><path d="M8.6 23.6 A11.6 11.6 0 1 1 30.6 28.6 L25.4 26.4 A6 6 0 1 0 14.6 21 H32 V26 H8.9Z" fill="#fff"/><path d="M29 31 A11.6 11.6 0 0 1 9.4 27 L15 26 A6 6 0 0 0 25 27.6Z" fill="#fff"/><path d="M6.6 42.4 Q0.6 30 5.4 17.4 Q11.6 4.6 26 4.2 Q32 4 36.4 1.6 Q35.4 8 27 8.6 Q15.4 9.4 10.4 19.4 Q6 29 8.8 38.4Z" fill="#56b823"/></svg>
<svg style="left:574px;top:6px" width="44" height="40" viewBox="0 0 44 40"><rect x="1" y="4" width="40" height="27" rx="1.5" fill="#3f86d6" stroke="#2a62ad"/><rect x="2.5" y="5.5" width="37" height="24" fill="#4d96e2"/><circle cx="12" cy="15" r="6.2" fill="none" stroke="#bfe0ff" stroke-width="1.4"/><path d="M12 15 V8.6 A6.4 6.4 0 0 1 18.4 15Z" fill="#f0a23a"/><g fill="#d7ecff"><rect x="22" y="9" width="15" height="3" rx="1.5"/><rect x="22" y="15" width="15" height="3" rx="1.5"/><rect x="22" y="21" width="15" height="3" rx="1.5"/><rect x="6" y="24.5" width="12" height="2" rx="1"/></g><ellipse cx="21" cy="35" rx="8.4" ry="4.2" fill="#c9cdd2" stroke="#9aa0a8"/><rect x="15" y="31" width="12" height="3" fill="#d8dbdf"/></svg>
<div class="a" style="left:645px;top:4px;width:40px;height:40px;border-radius:8px;background:#e42219"></div><div class="t" style="left:648px;top:15px;font-size:17px;color:#fff;font-weight:bold;letter-spacing:-.5px">有道</div>
<svg style="left:715px;top:4px" width="42" height="42" viewBox="0 0 42 42"><path d="M3 6 H15 L18 9 H36 V13 H3Z" fill="#e8c45c" stroke="#c39a36"/><rect x="6" y="4.5" width="9" height="6" fill="#f8f8f8" stroke="#bbb" stroke-width=".6"/><rect x="17" y="6.5" width="9" height="6" fill="#f8f8f8" stroke="#bbb" stroke-width=".6"/><rect x="27" y="8.5" width="8" height="5" fill="#f8f8f8" stroke="#bbb" stroke-width=".6"/><rect x="7" y="5.5" width="3" height="1.6" fill="#3aa34a"/><rect x="18" y="7.5" width="3" height="1.6" fill="#d93a2e"/><rect x="28" y="9.5" width="3" height="1.6" fill="#2e7ad9"/><path d="M2 12 H40 V36 Q40 38 38 38 H4 Q2 38 2 36Z" fill="#f6dc8a" stroke="#cfa640"/><path d="M2 12 H40 V22 H2Z" fill="#fae9a8" opacity=".8"/><path d="M7 38 V28 Q7 24.6 10.4 24.6 H31.6 Q35 24.6 35 28 V38 H29.4 V32.6 H12.6 V38Z" fill="#59a8e8" stroke="#2f78c0"/><path d="M8.4 28 Q8.4 26 10.4 26 H31.6 Q33.6 26 33.6 28 V30 H8.4Z" fill="#9fd0f6"/><rect x="14" y="33.6" width="14" height="3.4" fill="#e8c45c"/></svg>
<svg style="left:784px;top:3px" width="46" height="44" viewBox="0 0 46 44"><path d="M4 6 H24 L31 13 V40 H4Z" fill="#f6f6f2" stroke="#8a8a8a"/><path d="M24 6 V13 H31Z" fill="#d6d6d2" stroke="#8a8a8a" stroke-width=".7"/><g stroke="#b9c7d6" stroke-width=".8"><path d="M7 11 H22 M7 14 H26 M7 17 H28"/></g><path d="M6 38 V26 Q10 18 18 18 Q27 18 28 26 V38Z" fill="#7cc03a"/><path d="M6 38 V30 Q14 26 28 31 V38Z" fill="#4c9a1e"/><ellipse cx="19" cy="19" rx="6.6" ry="4.6" fill="#8ccc48" stroke="#35701a" stroke-width=".8"/><circle cx="16.4" cy="18" r="2.2" fill="#fff" stroke="#222" stroke-width=".6"/><circle cx="22.2" cy="17.6" r="2.2" fill="#fff" stroke="#222" stroke-width=".6"/><circle cx="16.8" cy="18.2" r=".9" fill="#111"/><circle cx="22.4" cy="17.8" r=".9" fill="#111"/><path d="M9 27 Q14 23.6 19 27.4 M11 31 H22" fill="none" stroke="#1d4a0c" stroke-width="1.1"/><path d="M38 4 L41.4 6 L29.6 32 L26.4 34.6 L26.2 30.2Z" fill="#f0a22a" stroke="#9a5f12" stroke-width=".7"/><path d="M38 4 L41.4 6 L40.2 8.6 L36.8 6.6Z" fill="#d24a3a"/><path d="M26.2 30.2 L29.6 32 L26.4 34.6Z" fill="#3a2a18"/></svg>
<svg style="left:855px;top:3px" width="42" height="44" viewBox="0 0 42 44"><defs><linearGradient id="psg" x1="0" y1="0" x2="1" y2="1"><stop offset="0" stop-color="#2a8ad8"/><stop offset="1" stop-color="#1258a2"/></linearGradient></defs><path d="M1 4 L6 1.4 H38 V33 L33 38 H1Z" fill="#0a3668"/><rect x="6" y="1.4" width="32" height="31.6" fill="url(#psg)"/><path d="M1 4 L6 1.4 V33 L1 38Z" fill="#0c4485"/><path d="M1 38 L6 33 H38 L33 38Z" fill="#082c57"/><text x="10.4" y="26.6" font-family="Liberation Sans" font-weight="bold" font-size="18.5" fill="#62c6f8" letter-spacing="-.6">Ps</text></svg>
<svg style="left:1468px;top:16px" width="22" height="14"><path d="M3 3 L5 1 H17 L19 3" fill="none" stroke="#555" stroke-width=".8"/><rect x="1" y="4" width="20" height="9" rx="1" fill="#e9ebee" stroke="#55595f"/><path d="M3 6.5 H19 M3 8.6 H19 M5 10.8 H17" stroke="#6a6f76" stroke-width="1" stroke-dasharray="1.6 1"/></svg>
<svg style="left:1493px;top:12px" width="22" height="22"><circle cx="11" cy="11" r="9.6" fill="#dfe6f2" stroke="#8c98ad"/><circle cx="11" cy="11" r="7.6" fill="#1d3fae"/><text x="7.6" y="15.6" font-family="Liberation Sans" font-weight="bold" font-size="12.5" fill="#fff">?</text></svg>
<svg style="left:1519px;top:13px" width="14" height="22"><rect x="3.4" y="2.4" width="6" height="4" fill="#fff" stroke="#444" stroke-width=".8"/><rect x="1.4" y="4.4" width="6" height="4" fill="#fff" stroke="#444" stroke-width=".8"/><path d="M3.6 16.6 H10.4 L7 20Z" fill="#fff" stroke="#55606c" stroke-width=".5"/></svg>
<div class="a" style="left:1543px;top:15px;width:19px;height:19px;border-radius:4px;background:#e0261c"></div><svg style="left:1546px;top:18px" width="14" height="13"><path d="M1 3 H6 V7 H1.6 V11.4 H8.4 M7 1.4 H12 V8 Q12 11.6 8.6 11.6" fill="none" stroke="#fff" stroke-width="1.6"/></svg>
<svg style="left:1570px;top:15px" width="24" height="20"><path d="M2 11 L13 5 L21 7 L10 14Z" fill="#70757c"/><path d="M2 11 L10 14 V16.4 L2 13.2Z" fill="#4d5157"/><path d="M10 14 L21 7 V9.2 L10 16.4Z" fill="#8b9097"/><circle cx="16.4" cy="15" r="3.6" fill="#2fa23c" stroke="#fff" stroke-width=".6"/><path d="M14.8 15 L16 16.3 L18.2 13.8" fill="none" stroke="#fff" stroke-width="1"/></svg>
<svg style="left:1601px;top:15px" width="24" height="20"><ellipse cx="9" cy="8" rx="8" ry="6.6" fill="#6cc43c"/><path d="M4 13 L3.4 16 L7 14Z" fill="#6cc43c"/><circle cx="6.4" cy="6.6" r="1" fill="#fff"/><circle cx="11.6" cy="6.6" r="1" fill="#fff"/><ellipse cx="16" cy="12.6" rx="6.4" ry="5.4" fill="#e9ece8" stroke="#a8ada6" stroke-width=".5"/><path d="M19 17 L20.6 19 L17.6 17.6Z" fill="#e9ece8"/><circle cx="14" cy="11.6" r=".8" fill="#777"/><circle cx="18" cy="11.6" r=".8" fill="#777"/></svg>
<svg style="left:1632px;top:13px" width="22" height="24"><rect x="4" y="10" width="14" height="10" fill="#2c3f9e" stroke="#111" stroke-width="1"/><rect x="6" y="12" width="10" height="6" fill="#6fb0f0"/><rect x="2" y="20" width="18" height="2.6" fill="#111"/><path d="M7 3 H15 V8 H7Z" fill="#1a1a1a"/><path d="M5 8 H17 V10 H5Z" fill="#222"/><rect x="9" y="1" width="4" height="3" fill="#222"/></svg>
<svg style="left:1662px;top:13px" width="24" height="24"><rect x="2.6" y="4" width="10" height="17" rx="1.4" fill="#fff" stroke="#333" stroke-width="1.3"/><rect x="5" y="2" width="5" height="2.4" fill="#333"/><rect x="4.6" y="7" width="6" height="12" fill="#e9e9e9"/><path d="M15 6 V10 M20 6 V10 M13.6 10 H21.4 V13 Q21.4 16 17.5 16 Q13.6 16 13.6 13Z M17.5 16 V22" fill="#fff" stroke="#333" stroke-width="1.3"/></svg>
<svg style="left:1693px;top:16px" width="20" height="18"><g fill="#fff" stroke="#4a5561" stroke-width=".7"><rect x="1" y="12.4" width="2.6" height="4"/><rect x="4.8" y="10" width="2.6" height="6.4"/><rect x="8.6" y="7.4" width="2.6" height="9"/><rect x="12.4" y="4.4" width="2.6" height="12"/><rect x="16.2" y="1" width="2.6" height="15.4"/></g></svg>
<svg style="left:1722px;top:13px" width="24" height="24"><path d="M2 9 H6 L11.4 3.6 V20.4 L6 15 H2Z" fill="#fff" stroke="#49525c" stroke-width="1"/><path d="M14.4 8 Q17 12 14.4 16 M17.6 6 Q21.4 12 17.6 18" fill="none" stroke="#fff" stroke-width="1.4"/><path d="M14.4 8 Q17 12 14.4 16 M17.6 6 Q21.4 12 17.6 18" fill="none" stroke="#5a6570" stroke-width=".5"/></svg>
<svg style="left:1752px;top:12px" width="24" height="26"><path d="M4 2 V24" stroke="#555" stroke-width="1.6"/><path d="M5 3 Q9 1 12 3.4 Q15 5.6 19 3.6 V12.6 Q15 14.6 12 12.4 Q9 10 5 12Z" fill="#fff" stroke="#555" stroke-width=".9"/><circle cx="16.6" cy="18.6" r="5" fill="#e02a1e" stroke="#fff" stroke-width=".8"/><path d="M14.6 16.6 L18.6 20.6 M18.6 16.6 L14.6 20.6" stroke="#fff" stroke-width="1.5"/></svg>
<svg style="left:1783px;top:15px" width="20" height="20"><circle cx="10" cy="10" r="8.6" fill="#6fd02e" stroke="#d9f2c8" stroke-width="1"/><path d="M5 10.4 A5 5 0 1 1 14.4 12.6 L12.4 11.4 A2.8 2.8 0 1 0 7.4 9.4 H15 V11.6 H5.2Z" fill="#fff"/><path d="M13.6 14 A5.2 5.2 0 0 1 5.6 12.4 L7.6 11.8 A3 3 0 0 0 12.2 12.6Z" fill="#fff"/></svg>
<div class="t" style="left:1838px;top:7px;font-size:15.5px;color:#fff;text-shadow:0 0 2px #34506e,0 0 1px #34506e">13:23</div>
<div class="t" style="left:1825px;top:28px;letter-spacing:.6px;font-size:15.5px;color:#fff;text-shadow:0 0 2px #34506e,0 0 1px #34506e">2020/3/6</div>
<div class="a" style="left:1905px;top:1px;width:15px;height:47px;border-left:1px solid #5f7892;background:linear-gradient(#c9d9ea,#9fb6cf 45%,#8aa3bf 50%,#a6bcd4);box-shadow:inset 1px 0 0 rgba(255,255,255,.5)"></div>
</div>
</body></html>
